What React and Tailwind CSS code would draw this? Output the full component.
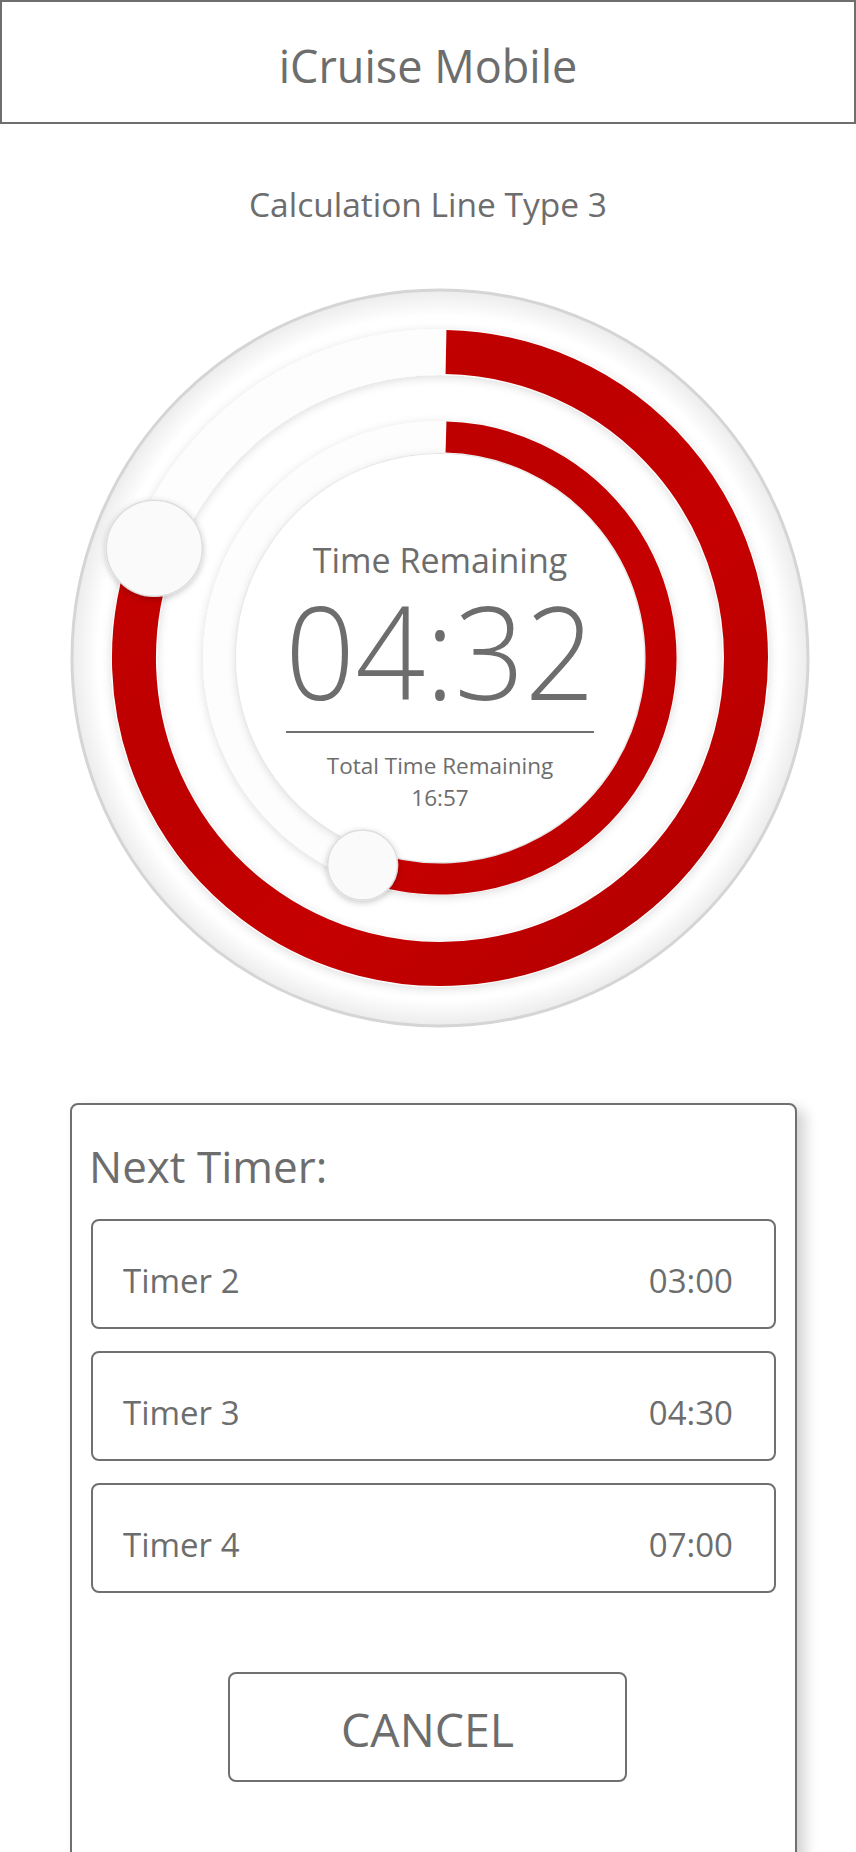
import React from "react";

function Dial() {
  return (
    <svg width="760" height="760" viewBox="0 0 760 760" className="[grid-area:1/1]">
      <defs>
        <filter id="soft" x="-15%" y="-15%" width="130%" height="130%">
          <feDropShadow dx="0" dy="2" stdDeviation="5" floodColor="#000" floodOpacity="0.14" />
        </filter>
        <filter id="knob" x="-40%" y="-40%" width="180%" height="180%">
          <feDropShadow dx="0" dy="2" stdDeviation="3" floodColor="#000" floodOpacity="0.22" />
        </filter>
        <radialGradient id="rim" cx="50%" cy="50%" r="50%">
          <stop offset="0.93" stopColor="#ffffff" />
          <stop offset="1" stopColor="#ececec" />
        </radialGradient>
        <linearGradient id="red" gradientUnits="userSpaceOnUse" x1="0" y1="0" x2="760" y2="760">
          <stop offset="0" stopColor="#cc0000" />
          <stop offset="0.4" stopColor="#bd0000" />
          <stop offset="0.6" stopColor="#c60000" />
          <stop offset="0.85" stopColor="#b40000" />
          <stop offset="1" stopColor="#c40000" />
        </linearGradient>
      </defs>
      <circle cx="380" cy="380" r="368" fill="url(#rim)" stroke="#d5d5d5" strokeWidth="3" />
      <circle cx="380" cy="380" r="306" fill="none" stroke="#fdfdfd" strokeWidth="46" filter="url(#soft)" />
      <circle cx="380" cy="380" r="221" fill="none" stroke="#fdfdfd" strokeWidth="32" filter="url(#soft)" />
      <circle cx="380" cy="380" r="204" fill="#ffffff" filter="url(#soft)" />
      <path d="M386 74.06 A306 306 0 1 1 94.3 270.3" stroke="url(#red)" strokeWidth="44" fill="none" />
      <path d="M386 159.08 A221 221 0 1 1 302.6 587" stroke="url(#red)" strokeWidth="31" fill="none" />
      <circle cx="94.3" cy="270.3" r="48" fill="#fafafa" stroke="#dedede" strokeWidth="1.5" filter="url(#knob)" />
      <circle cx="302.6" cy="587" r="35" fill="#fafafa" stroke="#dedede" strokeWidth="1.5" filter="url(#knob)" />
    </svg>
  );
}

export default function App() {
  const timers = [
    ["Timer 2", "03:00"],
    ["Timer 3", "04:30"],
    ["Timer 4", "07:00"],
  ];
  return (
    <div className="min-h-screen bg-white font-['Open_Sans',sans-serif] text-[#6d6d6d] overflow-hidden">
      <header className="h-[124px] border-2 border-[#6e6e6e] flex items-center justify-center pt-[7px]">
        <h1 className="text-[45px] leading-none">iCruise Mobile</h1>
      </header>
      <p className="mt-[64px] text-center text-[33.5px] leading-none">Calculation Line Type 3</p>
      <div className="mt-[56px] flex justify-center pl-[24px]">
        <div className="grid w-[760px] h-[760px]">
          <Dial />
          <div className="[grid-area:1/1] justify-self-center self-start mt-[265px] flex flex-col items-center">
            <div className="text-[34px] leading-none">Time Remaining</div>
            <div className="mt-[18px] text-[130px] leading-[0.85] font-[350] scale-x-[0.945]">04:32</div>
            <div className="mt-[26px] w-[308px] h-[2px] bg-[#707070]" />
            <div className="mt-[22px] text-[22.5px] leading-none">Total Time Remaining</div>
            <div className="mt-[9.5px] text-[22.5px] leading-none">16:57</div>
          </div>
        </div>
      </div>
      <div className="mt-[65px] ml-[70px] w-[727px] border-2 border-[#707070] rounded-[8px] bg-white shadow-[8px_6px_14px_rgba(0,0,0,0.18)] px-[19px] pt-[39px] pb-[140px]">
        <h2 className="text-[44px] leading-none ml-[-2px]">Next Timer:</h2>
        <div className="mt-[31px] flex flex-col gap-[22px]">
          {timers.map(([name, time]) => (
            <div
              key={name}
              className="h-[110px] border-2 border-[#707070] rounded-[8px] flex items-center justify-between pl-[30px] pr-[41px] pt-[14px]"
            >
              <span className="text-[33px] leading-none">{name}</span>
              <span className="text-[33px] leading-none">{time}</span>
            </div>
          ))}
        </div>
        <div className="mt-[79px] ml-[137px] w-[399px] h-[110px] border-2 border-[#707070] rounded-[8px] flex items-center justify-center pt-[6px]">
          <span className="text-[46.5px] leading-none">CANCEL</span>
        </div>
      </div>
    </div>
  );
}
